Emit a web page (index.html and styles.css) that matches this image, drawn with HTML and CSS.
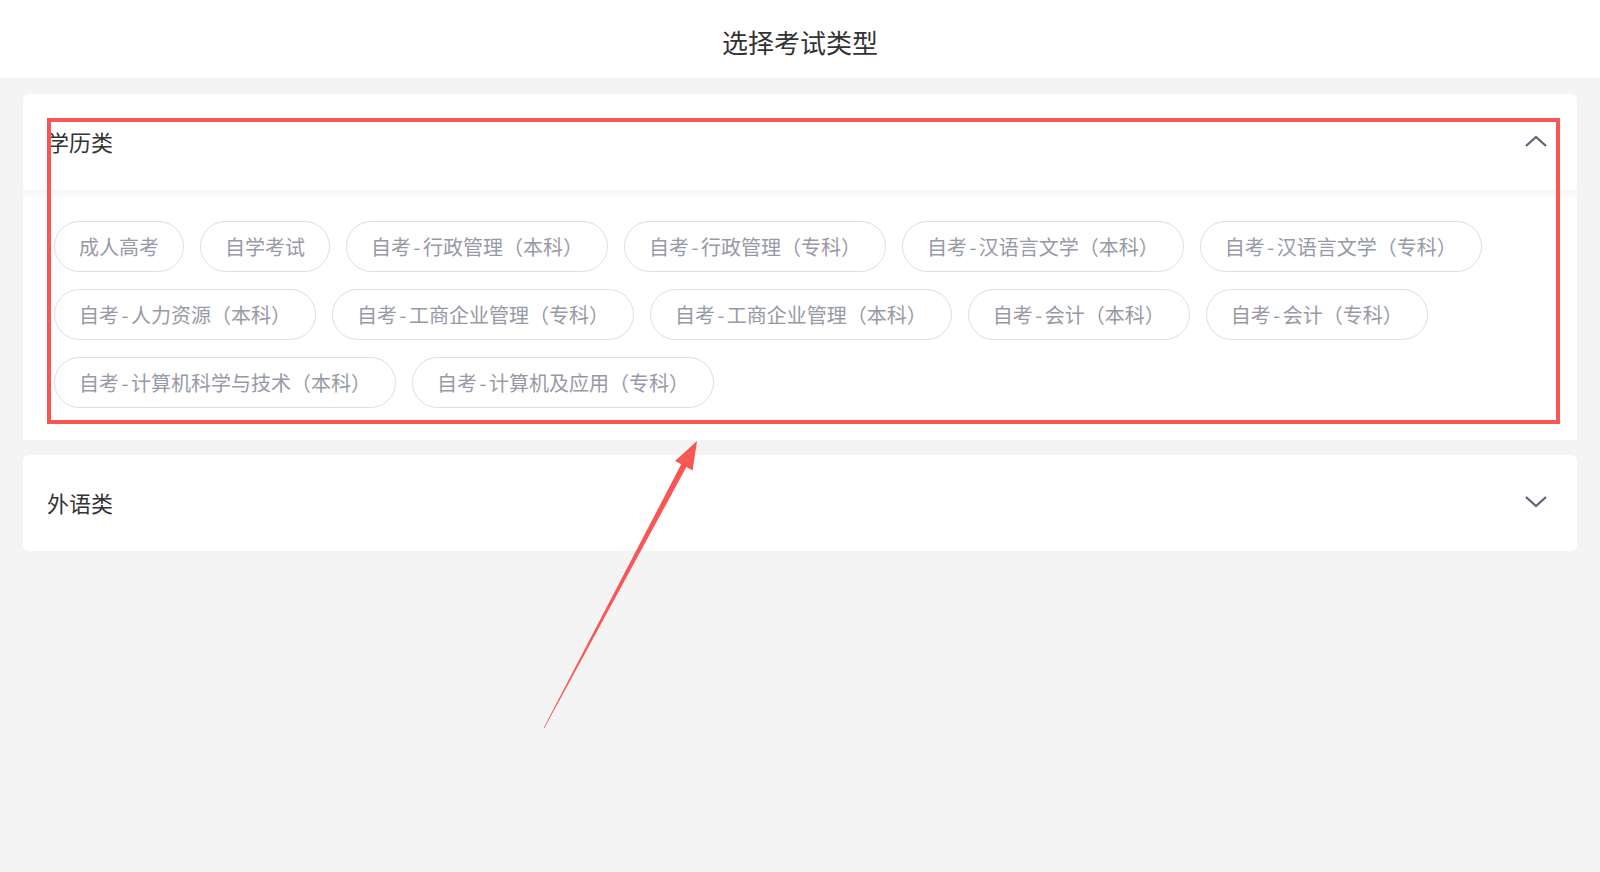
FILE: index.html
```html
<!DOCTYPE html>
<html lang="zh-CN">
<head>
    <meta charset="UTF-8">
    <meta name="viewport" content="width=device-width, initial-scale=1.0">
    <title>选择考试类型</title>
    <link rel="stylesheet" href="styles.css">
</head>
<body>
    <div class="topbar">选择考试类型</div>

    <div class="content">
        <div class="panel">
            <div class="panel-head">
                <span class="panel-title">学历类</span>
                <svg class="chevron" width="22" height="12" viewBox="0 0 22 12"><polyline points="1,11 11,2 21,11" /></svg>
            </div>
            <div class="tags">
                <span class="tag">成人高考</span>
                <span class="tag">自学考试</span>
                <span class="tag">自考<i>-</i>行政管理（本科）</span>
                <span class="tag">自考<i>-</i>行政管理（专科）</span>
                <span class="tag">自考<i>-</i>汉语言文学（本科）</span>
                <span class="tag">自考<i>-</i>汉语言文学（专科）</span>
                <span class="tag">自考<i>-</i>人力资源（本科）</span>
                <span class="tag">自考<i>-</i>工商企业管理（专科）</span>
                <span class="tag">自考<i>-</i>工商企业管理（本科）</span>
                <span class="tag">自考<i>-</i>会计（本科）</span>
                <span class="tag">自考<i>-</i>会计（专科）</span>
                <span class="tag">自考<i>-</i>计算机科学与技术（本科）</span>
                <span class="tag">自考<i>-</i>计算机及应用（专科）</span>
            </div>
        </div>

        <div class="panel">
            <div class="panel-head">
                <span class="panel-title">外语类</span>
                <svg class="chevron" width="22" height="12" viewBox="0 0 22 12"><polyline points="1,1 11,10 21,1" /></svg>
            </div>
        </div>
    </div>

    <!-- annotation drawn over the screenshot -->
    <div class="mark-box"></div>
    <svg class="mark-arrow" width="1600" height="872" viewBox="0 0 1600 872">
        <polygon points="543.6,728 681.2,464.3 675,461 697,441 692.6,470.4 686.4,467.1 544.4,728" />
    </svg>
</body>
</html>
```

FILE: styles.css
```css
body { margin: 0; background: #f4f4f4; font-family: "Noto Sans CJK SC", "Noto Sans", sans-serif; color: #333; position: relative; min-height: 872px; }
.topbar { height: 78px; background: #fff; display: flex; align-items: center; justify-content: center; font-size: 26px; color: #333; padding-top: 4px; box-sizing: border-box; }
.content { padding: 16px 23px; }
.panel { background: #fff; border-radius: 6px; margin-bottom: 15px; }
.panel-head { height: 96px; display: flex; align-items: center; justify-content: space-between; padding: 0 30px 2px 24px; box-sizing: border-box; }
.panel-title { font-size: 22px; color: #333; }
.chevron { fill: none; stroke: #5a6373; stroke-width: 2.2; }
.tags { display: flex; flex-wrap: wrap; column-gap: 16px; row-gap: 17px; padding: 31px 24px 32px 31px; background: linear-gradient(#f6f6f6, #fff 10px); }
.tag { height: 51px; box-sizing: border-box; border: 1px solid #dedede; border-radius: 26px; padding: 0 24px; font-size: 20px; line-height: 49px; color: #979aa6; white-space: nowrap; }
.tag i { font-style: normal; margin: 0 2.5px; }
.mark-box { position: absolute; left: 47px; top: 118px; width: 1513px; height: 306px; box-sizing: border-box; border: 4px solid #f95656; }
.mark-arrow { position: absolute; left: 0; top: 0; pointer-events: none; }
.mark-arrow polygon { fill: #f95656; }
```
